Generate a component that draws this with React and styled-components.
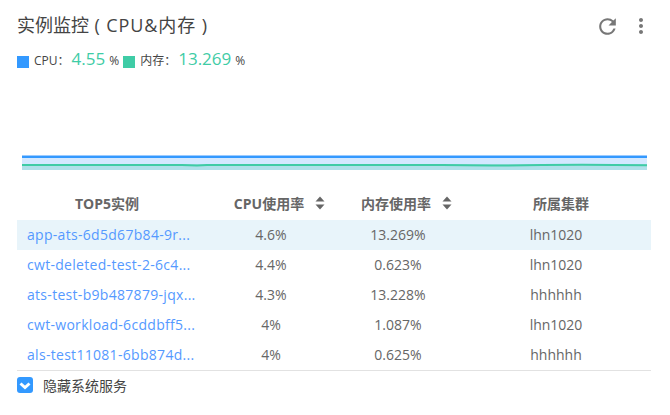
import styled, { createGlobalStyle } from 'styled-components';
import { MdRefresh, MdMoreVert } from 'react-icons/md';

const GlobalStyle = createGlobalStyle`
    html, body {
        margin: 0;
        padding: 0;
        background: #fff;
        font-family: "Open Sans", "Noto Sans CJK SC", sans-serif;
    }
`;

const rows = [
    { name: 'app-ats-6d5d67b84-9r...', cpu: '4.6%', mem: '13.269%', cluster: 'lhn1020' },
    { name: 'cwt-deleted-test-2-6c4...', cpu: '4.4%', mem: '0.623%', cluster: 'lhn1020' },
    { name: 'ats-test-b9b487879-jqx...', cpu: '4.3%', mem: '13.228%', cluster: 'hhhhhh' },
    { name: 'cwt-workload-6cddbff5...', cpu: '4%', mem: '1.087%', cluster: 'lhn1020' },
    { name: 'als-test11081-6bb874d...', cpu: '4%', mem: '0.625%', cluster: 'hhhhhh' },
];

function SortIcon() {
    return (
        <svg width="10" height="14" viewBox="0 0 10 14">
            <path d="M5 0.5 L9.5 5.5 H0.5 Z" fill="#666" />
            <path d="M5 13.5 L9.5 8.5 H0.5 Z" fill="#666" />
        </svg>
    );
}

function App() {
    return (
        <>
            <GlobalStyle />
            <Panel>
                <Header>
                    <Title>实例监控<TitleNote> ( CPU&amp;内存 )</TitleNote></Title>
                    <Actions>
                        <MdRefresh size={25} color="#777" />
                        <MdMoreVert size={24} color="#777" />
                    </Actions>
                </Header>
                <Legend>
                    <Swatch $color="#3399ff" />
                    <LegendLabel>CPU：</LegendLabel>
                    <LegendValue>4.55</LegendValue>
                    <Unit>%</Unit>
                    <Swatch $color="#3fcca6" />
                    <LegendLabel>内存：</LegendLabel>
                    <LegendValue>13.269</LegendValue>
                    <Unit>%</Unit>
                </Legend>
                <Chart viewBox="0 0 625 16" width="625" height="16">
                    <rect x="0" y="0" width="625" height="15" fill="#d3e8ff" />
                    <path d="M0 9 L625 9 V15 H0 Z" fill="#b0e0ea" />
                    <path d="M0 0 H625 V1 H0 Z" fill="#9ccbff" />
                    <path d="M0 2 H625" stroke="#3399ff" strokeWidth="1.8" fill="none" />
                    <path
                        d="M0 10 L160 10 L175 10.6 L185 10 L420 10 L470 10.6 L520 10 L560 9.8 L625 10.3"
                        stroke="#3fcca6"
                        strokeWidth="2"
                        fill="none"
                    />
                </Chart>
                <TableHead>
                    <HeadCell>TOP5实例</HeadCell>
                    <HeadCell $shift={17}>
                        <span>CPU使用率</span>
                        <SortIcon />
                    </HeadCell>
                    <HeadCell $shift={7}>
                        <span>内存使用率</span>
                        <SortIcon />
                    </HeadCell>
                    <HeadCell $shift={10}>所属集群</HeadCell>
                </TableHead>
                {rows.map((row, i) => (
                    <Row key={row.name} $active={i === 0}>
                        <NameCell>{row.name}</NameCell>
                        <Cell>{row.cpu}</Cell>
                        <MemCell>{row.mem}</MemCell>
                        <Cell>{row.cluster}</Cell>
                    </Row>
                ))}
                <Footer>
                    <CheckBox>
                        <svg width="12" height="10" viewBox="0 0 12 10">
                            <path d="M1.5 3.5 L6 7.5 L10.5 3.5" stroke="#fff" strokeWidth="3" fill="none" />
                        </svg>
                    </CheckBox>
                    <FooterLabel>隐藏系统服务</FooterLabel>
                </Footer>
            </Panel>
        </>
    );
}

const Panel = styled.div`
    width: 634px;
    height: 415px;
    padding-left: 17px;
    box-sizing: content-box;
    overflow: hidden;
`;

const Header = styled.div`
    display: flex;
    justify-content: space-between;
    align-items: center;
    height: 26px;
    padding-top: 12px;
`;

const Title = styled.h2`
    margin: 0;
    font-size: 18px;
    font-weight: 400;
    color: #444;
    line-height: 26px;
    white-space: pre;
`;

const TitleNote = styled.span`
    letter-spacing: 0.9px;
`;

const Actions = styled.div`
    display: flex;
    align-items: center;
    gap: 9px;
    margin-right: -2px;
    margin-top: 2px;
`;

const Legend = styled.div`
    display: flex;
    align-items: center;
    height: 24px;
    margin-top: 10px;
    color: #444;
`;

const Swatch = styled.i`
    display: block;
    width: 12px;
    height: 12px;
    margin-top: 4px;
    background: ${(props) => props.$color};
`;

const LegendLabel = styled.span`
    margin: 0 2px 0 5px;
    font-size: 12px;
`;

const LegendValue = styled.span`
    margin-top: -3px;
    font-size: 17px;
    color: #3fcca6;
`;

const Unit = styled.span`
    margin: 0 0 0 4px;
    font-size: 12px;
    width: 14px;
`;

const Chart = styled.svg`
    display: block;
    margin: 83px 0 0 5px;
`;

const TableHead = styled.div`
    display: grid;
    grid-template-columns: 180px 148px 116px 190px;
    height: 30px;
    margin-top: 19px;
    align-items: center;
`;

const HeadCell = styled.div`
    display: flex;
    justify-content: center;
    align-items: center;
    gap: 11px;
    padding-left: ${(props) => props.$shift || 0}px;
    padding-bottom: 4px;
    font-size: 14px;
    font-weight: 700;
    color: #666;
`;

const Row = styled.div`
    display: grid;
    grid-template-columns: 180px 148px 116px 190px;
    height: 30px;
    padding-bottom: 2px;
    box-sizing: border-box;
    align-items: center;
    font-size: 14px;
    color: #666;
    background: ${(props) => (props.$active ? '#e8f4fa' : 'transparent')};
`;

const Cell = styled.div`
    text-align: center;
`;

const MemCell = styled(Cell)`
    padding-right: 10px;
`;

const NameCell = styled.div`
    padding-left: 10px;
    color: #5599ff;
    letter-spacing: 0.3px;
    white-space: nowrap;
`;

const Footer = styled.div`
    display: flex;
    align-items: center;
    gap: 10px;
    height: 30px;
    padding-bottom: 2px;
    box-sizing: border-box;
    border-top: 1px solid #e2e2e2;
`;

const CheckBox = styled.div`
    display: flex;
    align-items: center;
    justify-content: center;
    width: 16px;
    height: 16px;
    border-radius: 3px;
    background: #3399ff;
`;

const FooterLabel = styled.span`
    font-size: 14px;
    color: #444;
`;

export default App;
